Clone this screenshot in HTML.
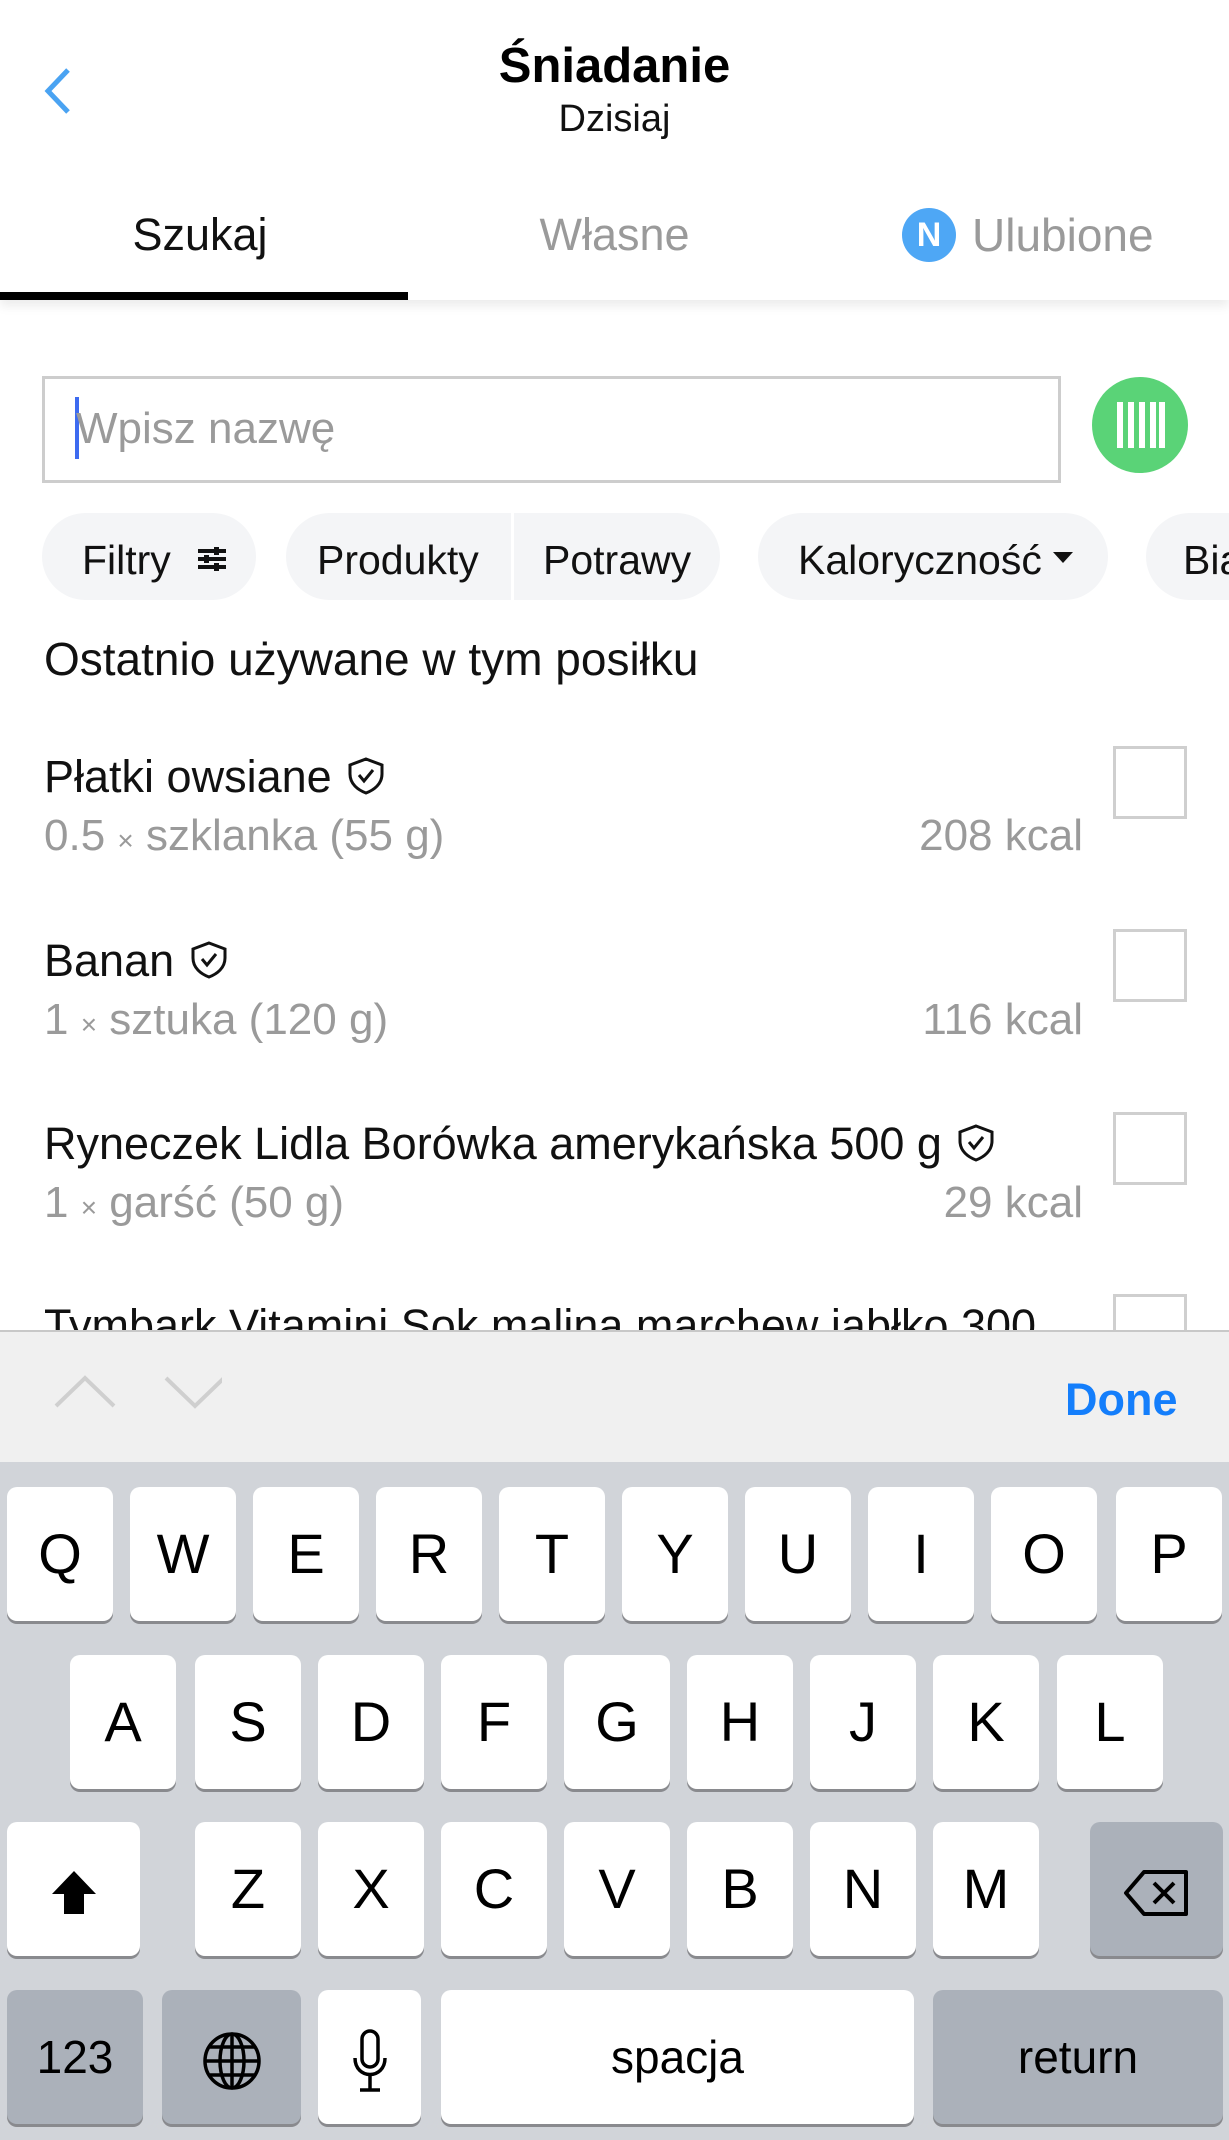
<!DOCTYPE html>
<html><head><meta charset="utf-8"><style>
*{margin:0;padding:0;box-sizing:border-box}
body{width:1229px;height:2140px;overflow:hidden;background:#fff;font-family:"Liberation Sans",sans-serif;position:relative;color:#111}
.a{position:absolute;white-space:nowrap}
.chip{position:absolute;top:513px;height:87px;background:#f4f5f7;border-radius:44px;font-size:41px;line-height:87px;color:#111}
.key{position:absolute;width:106px;height:134px;background:#fff;border-radius:10px;box-shadow:0 3px 0 #898a8e;font-size:56px;line-height:134px;text-align:center;color:#000}
.dk{background:#abb1ba}
.it{font-size:45px;color:#111}
.sub{font-size:44px;color:#9a9a9a}
.cb{position:absolute;width:74px;height:73px;border:3px solid #cfcfcf;left:1113px}
</style></head><body>
<svg class="a" style="left:40px;top:66px" width="36" height="50" viewBox="0 0 36 50"><path d="M28 4 L8 25 L28 46" fill="none" stroke="#4aa3f2" stroke-width="5"/></svg>
<div class="a" style="left:0;width:1229px;text-align:center;top:38px;font-size:49px;font-weight:bold;color:#000">Śniadanie</div>
<div class="a" style="left:0;width:1229px;text-align:center;top:98px;font-size:38px;color:#111">Dzisiaj</div>

<div class="a" style="left:0;top:0;width:1229px;height:300px;box-shadow:0 6px 10px rgba(0,0,0,0.08);z-index:-1"></div>
<div class="a" style="left:0;width:400px;text-align:center;top:209px;font-size:45px;color:#111">Szukaj</div>
<div class="a" style="left:408px;width:413px;text-align:center;top:209px;font-size:45px;color:#9a9a9a">Własne</div>
<div class="a" style="left:902px;top:208px;width:54px;height:54px;border-radius:50%;background:#4ea7f5;color:#fff;font-weight:bold;font-size:34px;line-height:54px;text-align:center">N</div>
<div class="a" style="left:972px;top:208px;font-size:46px;color:#9a9a9a">Ulubione</div>
<div class="a" style="left:0;top:292px;width:408px;height:8px;background:#000"></div>

<div class="a" style="left:42px;top:376px;width:1019px;height:107px;border:3px solid #cdcdcd"></div>
<div class="a" style="left:75px;top:397px;width:4px;height:62px;background:#3d6bf0"></div>
<div class="a" style="left:76px;top:404px;font-size:44px;color:#9a9a9a">Wpisz nazwę</div>
<div class="a" style="left:1092px;top:377px;width:96px;height:96px;border-radius:50%;background:#5ad377"></div>
<svg class="a" style="left:1115px;top:400px" width="52" height="50"><g fill="#fff"><rect x="2" y="2" width="6" height="46"/><rect x="13" y="2" width="6" height="46"/><rect x="24" y="2" width="6" height="46"/><rect x="35" y="2" width="6" height="46"/><rect x="44" y="2" width="6" height="46"/></g></svg>

<div class="chip" style="left:42px;width:214px"></div>
<div class="a" style="left:82px;top:517px;font-size:41px;line-height:87px">Filtry</div>
<svg class="a" style="left:196px;top:546px" width="32" height="26"><g stroke="#111" stroke-width="4"><line x1="2" y1="5" x2="30" y2="5"/><line x1="2" y1="13" x2="30" y2="13"/><line x1="2" y1="21" x2="30" y2="21"/></g><rect x="18" y="1" width="5" height="8" fill="#111"/><rect x="8" y="9" width="5" height="8" fill="#111"/><rect x="18" y="17" width="5" height="8" fill="#111"/></svg>
<div class="chip" style="left:286px;width:434px"></div>
<div class="a" style="left:511px;top:513px;width:3px;height:87px;background:#fff"></div>
<div class="a" style="left:317px;top:517px;font-size:41px;line-height:87px">Produkty</div>
<div class="a" style="left:543px;top:517px;font-size:41px;line-height:87px">Potrawy</div>
<div class="chip" style="left:758px;width:350px"></div>
<div class="a" style="left:798px;top:517px;font-size:41px;line-height:87px">Kaloryczność</div>
<svg class="a" style="left:1053px;top:552px" width="20" height="12"><path d="M0 0 H20 L10 11 Z" fill="#111"/></svg>
<div class="chip" style="left:1146px;width:200px"></div>
<div class="a" style="left:1183px;top:517px;font-size:41px;line-height:87px">Biał</div>

<div class="a" style="left:44px;top:632px;font-size:46px;color:#111">Ostatnio używane w tym posiłku</div>

<div class="a it" style="left:44px;top:751px">Płatki owsiane <svg width="44" height="40" viewBox="0 0 44 40" style="vertical-align:-4px"><path d="M22 3 L38 9 V18 C38 28 30 34 22 37 C14 34 6 28 6 18 V9 Z" fill="none" stroke="#111" stroke-width="3"/><path d="M15 19 L20 25 L29 14" fill="none" stroke="#111" stroke-width="3"/></svg></div>
<div class="a sub" style="left:44px;top:811px">0.5 <span style="font-size:28px">×</span> szklanka (55 g)</div>
<div class="a sub" style="right:146px;top:811px">208 kcal</div>
<div class="cb" style="top:746px"></div>

<div class="a it" style="left:44px;top:935px">Banan <svg width="44" height="40" viewBox="0 0 44 40" style="vertical-align:-4px"><path d="M22 3 L38 9 V18 C38 28 30 34 22 37 C14 34 6 28 6 18 V9 Z" fill="none" stroke="#111" stroke-width="3"/><path d="M15 19 L20 25 L29 14" fill="none" stroke="#111" stroke-width="3"/></svg></div>
<div class="a sub" style="left:44px;top:995px">1 <span style="font-size:28px">×</span> sztuka (120 g)</div>
<div class="a sub" style="right:146px;top:995px">116 kcal</div>
<div class="cb" style="top:929px"></div>

<div class="a it" style="left:44px;top:1118px">Ryneczek Lidla Borówka amerykańska 500 g <svg width="44" height="40" viewBox="0 0 44 40" style="vertical-align:-4px"><path d="M22 3 L38 9 V18 C38 28 30 34 22 37 C14 34 6 28 6 18 V9 Z" fill="none" stroke="#111" stroke-width="3"/><path d="M15 19 L20 25 L29 14" fill="none" stroke="#111" stroke-width="3"/></svg></div>
<div class="a sub" style="left:44px;top:1178px">1 <span style="font-size:28px">×</span> garść (50 g)</div>
<div class="a sub" style="right:146px;top:1178px">29 kcal</div>
<div class="cb" style="top:1112px"></div>

<div class="a it" style="left:44px;top:1300px">Tymbark Vitamini Sok malina marchew jabłko 300</div>
<div class="cb" style="top:1294px"></div>

<div class="a" style="left:0;top:1330px;width:1229px;height:132px;background:#f0f0f0;border-top:2px solid #c8c8c8"></div>
<svg class="a" style="left:52px;top:1372px" width="170" height="40"><path d="M4 34 L33 6 L62 34" fill="none" stroke="#cfcfcf" stroke-width="4"/><path d="M114 6 L143 34 L172 6" fill="none" stroke="#cfcfcf" stroke-width="4"/></svg>
<div class="a" style="left:1065px;top:1374px;font-size:45px;font-weight:bold;color:#147efb">Done</div>

<div class="a" style="left:0;top:1462px;width:1229px;height:678px;background:#d1d4d9"></div>
<div class="key" style="left:7px;top:1487px">Q</div>
<div class="key" style="left:130px;top:1487px">W</div>
<div class="key" style="left:253px;top:1487px">E</div>
<div class="key" style="left:376px;top:1487px">R</div>
<div class="key" style="left:499px;top:1487px">T</div>
<div class="key" style="left:622px;top:1487px">Y</div>
<div class="key" style="left:745px;top:1487px">U</div>
<div class="key" style="left:868px;top:1487px">I</div>
<div class="key" style="left:991px;top:1487px">O</div>
<div class="key" style="left:1116px;top:1487px">P</div>

<div class="key" style="left:70px;top:1655px">A</div>
<div class="key" style="left:195px;top:1655px">S</div>
<div class="key" style="left:318px;top:1655px">D</div>
<div class="key" style="left:441px;top:1655px">F</div>
<div class="key" style="left:564px;top:1655px">G</div>
<div class="key" style="left:687px;top:1655px">H</div>
<div class="key" style="left:810px;top:1655px">J</div>
<div class="key" style="left:933px;top:1655px">K</div>
<div class="key" style="left:1057px;top:1655px">L</div>

<div class="key" style="left:7px;top:1822px;width:133px"><svg width="50" height="50" viewBox="0 0 50 50" style="vertical-align:middle"><path d="M25 3 L47 26 H35 V46 H15 V26 H3 Z" fill="#000"/></svg></div>
<div class="key" style="left:195px;top:1822px">Z</div>
<div class="key" style="left:318px;top:1822px">X</div>
<div class="key" style="left:441px;top:1822px">C</div>
<div class="key" style="left:564px;top:1822px">V</div>
<div class="key" style="left:687px;top:1822px">B</div>
<div class="key" style="left:810px;top:1822px">N</div>
<div class="key" style="left:933px;top:1822px">M</div>
<div class="key dk" style="left:1090px;top:1822px;width:133px"><svg width="70" height="50" viewBox="0 0 70 50" style="vertical-align:middle"><path d="M22 4 H64 V46 H22 L4 25 Z" fill="none" stroke="#000" stroke-width="4" stroke-linejoin="round"/><path d="M32 15 L52 35 M52 15 L32 35" stroke="#000" stroke-width="4"/></svg></div>

<div class="key dk" style="left:7px;top:1990px;width:136px;font-size:46px">123</div>
<div class="key dk" style="left:162px;top:1990px;width:139px"><svg width="62" height="62" viewBox="0 0 62 62" style="vertical-align:middle"><g fill="none" stroke="#000" stroke-width="3.5"><circle cx="31" cy="31" r="27"/><ellipse cx="31" cy="31" rx="12" ry="27"/><line x1="31" y1="4" x2="31" y2="58"/><line x1="4" y1="31" x2="58" y2="31"/><path d="M9 17 H53 M9 45 H53"/></g></svg></div>
<div class="key" style="left:318px;top:1990px;width:103px"><svg width="36" height="66" viewBox="0 0 36 66" style="vertical-align:middle"><g fill="none" stroke="#000" stroke-width="3.5"><rect x="10" y="3" width="16" height="36" rx="8"/><path d="M3 30 C3 52 33 52 33 30"/><line x1="18" y1="48" x2="18" y2="62"/><line x1="8" y1="62" x2="28" y2="62"/></g></svg></div>
<div class="key" style="left:441px;top:1990px;width:473px;font-size:46px">spacja</div>
<div class="key dk" style="left:933px;top:1990px;width:290px;font-size:46px">return</div>
</body></html>
